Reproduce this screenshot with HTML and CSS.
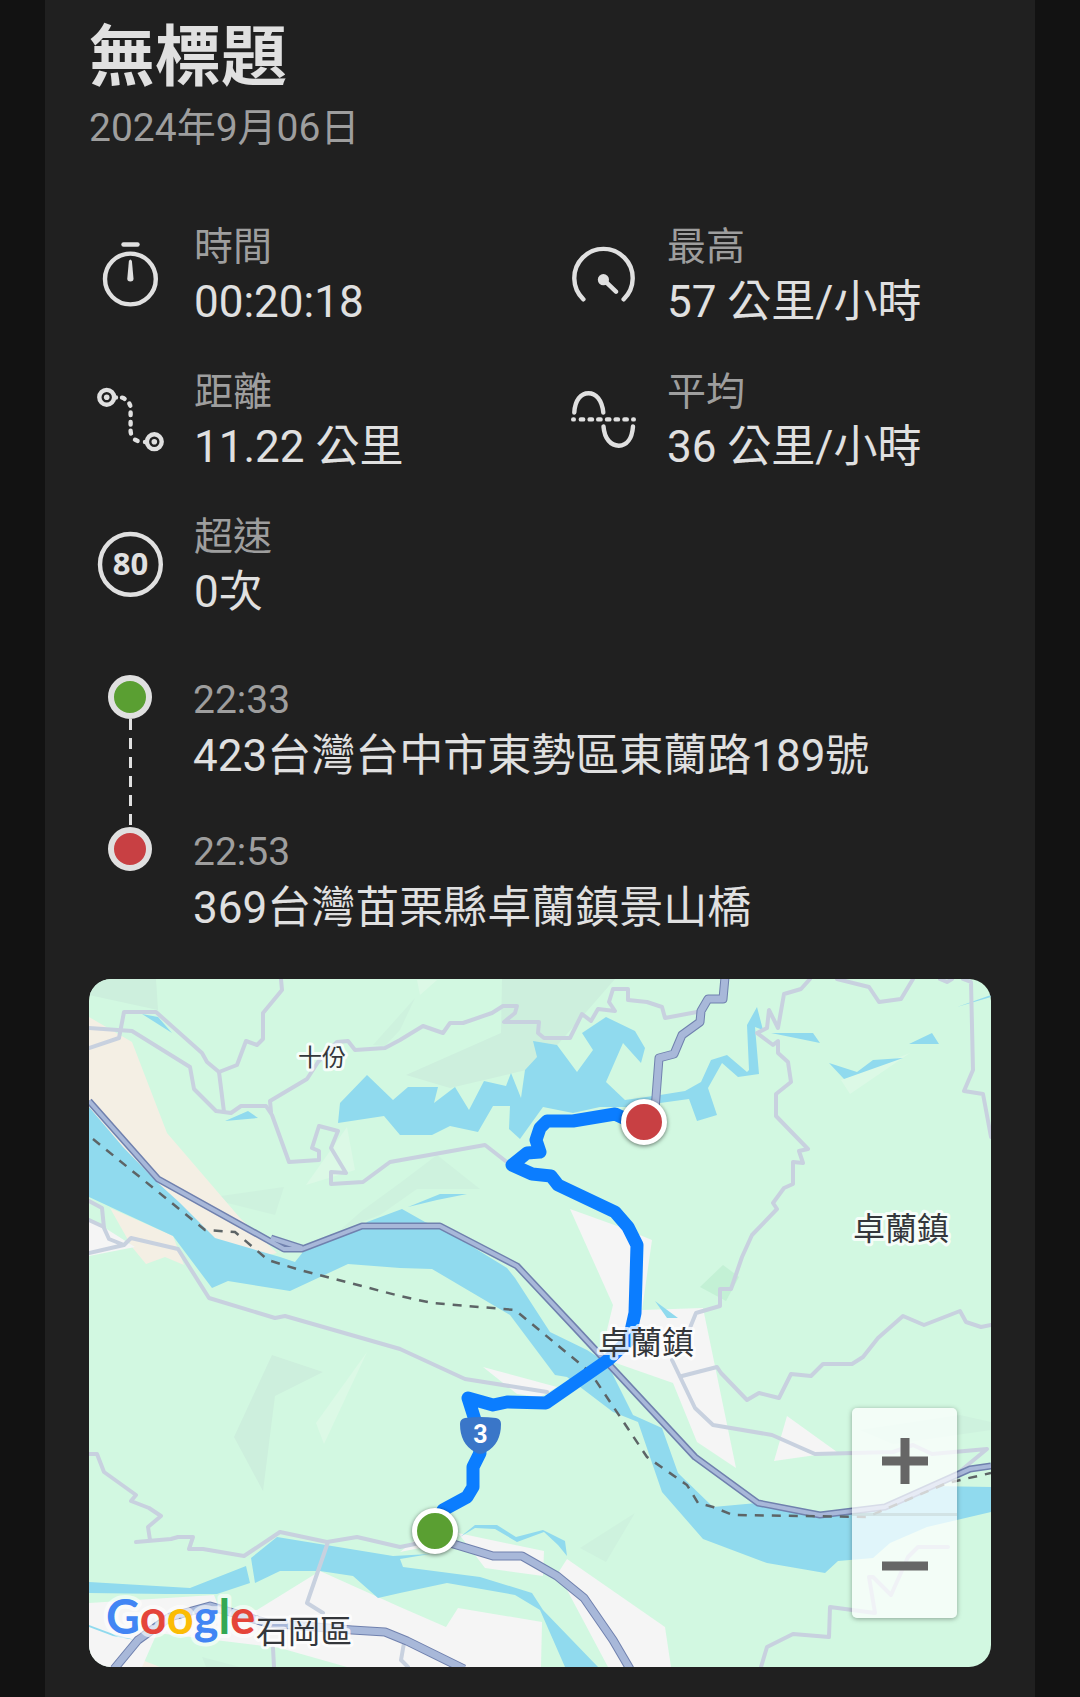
FILE: index.html
```html
<!DOCTYPE html>
<html lang="zh-Hant">
<head>
<meta charset="utf-8">
<meta name="viewport" content="width=device-width, initial-scale=1">
<title>無標題</title>
<link rel="stylesheet" href="styles.css">
</head>
<body>
<main class="trip">
  <header class="trip-header">
    <h1 class="trip-title">無標題</h1>
    <p class="trip-date">2024年9月06日</p>
  </header>

  <dl class="stats">
    <div class="stat">
      <svg class="icon" viewBox="0 0 84 84" aria-hidden="true">
        <circle cx="41.4" cy="44" r="25.4"/>
        <path d="M34.5 9.5h14"/>
        <path class="solid" d="M39.9 26q1.5-3 3 0l1.6 17.500q.2 3-3.100 3t-3.100-3z"/>
      </svg>
      <div class="stat-text"><dt>時間</dt><dd>00:20:18</dd></div>
    </div>
    <div class="stat">
      <svg class="icon" viewBox="0 0 84 84" aria-hidden="true">
        <path d="M21.400 64.300A29.200 29.200 0 1 1 61.600 64.300M41.500 44.700L54 56.700"/>
        <circle class="solid" cx="41.400" cy="44.700" r="5.600"/>
      </svg>
      <div class="stat-text"><dt>最高</dt><dd>57 公里/小時</dd></div>
    </div>
    <div class="stat">
      <svg class="icon" viewBox="0 0 84 84" aria-hidden="true">
        <circle cx="17.700" cy="17.300" r="7.400"/><circle class="solid" cx="17.700" cy="17.300" r="2.800"/>
        <circle cx="65.300" cy="61.700" r="7.400"/><circle class="solid" cx="65.300" cy="61.700" r="2.800"/>
        <path d="M26 17.500h1M33 17.600q1.500.2 2.600 1.200M40.300 23.500l1 2.200M41.600 32.500v2.600M41.600 42v2.600M41.600 50.800q0 1.500.4 2.600M46 59.700q1.200.8 2.600 1.200M56 62h1"/>
      </svg>
      <div class="stat-text"><dt>距離</dt><dd>11.22 公里</dd></div>
    </div>
    <div class="stat">
      <svg class="icon" viewBox="0 0 84 84" aria-hidden="true">
        <path d="M12.300 32.500C13 20 19 13.300 26.500 13.300S40 20 41.300 32.500M41.500 46.500C42.500 59 49 65.700 56.800 65.700S70 59 71 46.500"/>
        <path d="M11.200 39.400h.6M18.800 39.400h2.400M27.600 39.400h2.400M36.200 39.400h2.400M45 39.400h2.400M53.600 39.400h2.400M62.400 39.400h2.400M71.200 39.400h.6"/>
      </svg>
      <div class="stat-text"><dt>平均</dt><dd>36 公里/小時</dd></div>
    </div>
    <div class="stat">
      <svg class="icon" viewBox="0 0 84 84" aria-hidden="true">
        <circle cx="41.400" cy="39.400" r="30.400"/>
        <text class="limit" x="41.400" y="50.400">80</text>
      </svg>
      <div class="stat-text"><dt>超速</dt><dd>0次</dd></div>
    </div>
  </dl>

  <ol class="stops">
    <li class="stop">
      <div class="rail"><span class="dot dot-start"></span><span class="dashes"></span></div>
      <div><time class="stop-time">22:33</time><p class="stop-address">423台灣台中市東勢區東蘭路189號</p></div>
    </li>
    <li class="stop">
      <div class="rail"><span class="dot dot-end"></span></div>
      <div><time class="stop-time">22:53</time><p class="stop-address">369台灣苗栗縣卓蘭鎮景山橋</p></div>
    </li>
  </ol>

  <section class="map" aria-label="地圖">
    <svg class="map-canvas" viewBox="89 979 902 688" preserveAspectRatio="xMidYMid slice">
      <rect class="land" x="89" y="979" width="902" height="688"/>
      <!-- relief -->
      <g class="relief">
        <path d="M89 995L158 1010 156 979H89zM502 979H615L560 1042 535 1068 450 1088 406 1075 501 1033zM272 1355L323 1372 275 1396 263 1491 234 1437z"/>
        <path class="relief-faint" d="M207 1198L284 1187 275 1215zM340 1230L363 1210 400 1183 437 1155 480 1189H417L380 1215zM373 1045L415 998 400 1030 385 1046zM580 1548L635 1513 606 1562zM860 1430L960 1415 991 1422V1430L893 1444zM202 1657L240 1667H206z"/>
        <path class="relief-dark" d="M700 1287L723 1265 739 1277 726 1301z"/>
        <path class="relief-light" d="M367 1352L316 1423 324 1444zM347 1127L355 1170 306 1185zM841 1080L910 1053 850 1094zM417 980H437L420 995z"/>
      </g>
      <path class="sand" d="M89 1017L132 1042 167 1133 240 1218 277 1253 240 1262 89 1120zM110 1208L173 1236 184 1265 165 1257 146 1264 132 1247zM142 1660L160 1667H140z"/>
      <path class="town" d="M89 1220L105 1228 135 1247 89 1256zM570 1209L620 1227 652 1240 642 1310 703 1308 736 1468 697 1442 673 1383 613 1362 607 1330 613 1305zM483 1367L557 1387 540 1397 517 1394zM787 1416L837 1452 774 1461zM458 1533L544 1551 543 1576 485 1568 475 1555zM567 1559L665 1627 671 1667H608L558 1573zM89 1603L214 1595 220 1610H257L320 1571 400 1607 446 1627 458 1608 542 1622 541 1667H347L280 1648 157 1633 142 1667H89zM415 1540L430 1537V1546L400 1552z"/>
      <g class="water">
        <path d="M89 1107L123 1147 158 1183 180 1203 215 1238 280 1257 295 1262 303 1252 362 1228 367 1222 402 1209 425 1222 442 1228 507 1268 515 1278 550 1332 587 1350 607 1363 633 1415 662 1428 678 1473 713 1507 757 1503 820 1515 885 1507 930 1486 991 1487V1512L927 1527 890 1543 873 1558 838 1561 825 1573 767 1563 703 1539 662 1492 638 1422 613 1412 567 1377 555 1375 510 1315 432 1269 400 1268 348 1264 290 1291 228 1281 212 1288 173 1236 89 1197z"/>
        <path d="M338 1123L340 1103 367 1075 393 1100 408 1087H438L434 1103 455 1087 469 1110 484 1081 506 1086 511 1073 521 1098 525 1070 537 1057 533 1041 557 1045 577 1072 593 1050 582 1033 606 1017 635 1031 645 1048 641 1063 623 1043 606 1082 625 1100 660 1095 685 1091 701 1082 711 1060 727 1055 747 1072 749 1070 747 1025 757 1007 763 1030 755 1027 759 1074 738 1077 722 1063 708 1088 717 1115 697 1121 689 1099 660 1103 627 1107 600 1107 573 1113 543 1107 520 1139 509 1129 510 1106H493L478 1132 450 1126 432 1135H400L384 1116z"/>
        <path d="M142 1014L158 1017 172 1033zM225 1121L248 1111 258 1118zM408 1207L440 1194H467L437 1200zM771 1033H813L820 1043zM829 1063L857 1072 873 1060 903 1058 844 1079zM909 1044L932 1033 939 1044zM957 1007L991 995V997zM655 1301L678 1318H667z"/>
        <path d="M89 1582L190 1588 246 1566 250 1583 217 1594H166L89 1593zM251 1558L277 1537 393 1556 430 1554 400 1559 403 1567 480 1577 532 1593 543 1610 598 1667H565L540 1610 515 1595 447 1583 400 1593 378 1598 353 1576 320 1571H280L255 1583zM460 1537L475 1525H497L516 1537 543 1530 565 1541 567 1556 558 1545 544 1532 517 1542 495 1529 475 1528zM89 1625L113 1634 135 1640 113 1636 89 1627z"/>
      </g>
      <g class="road">
        <path d="M89 1048L119 1038 124 1012H156L202 1053 207 1062 219 1072 224 1112"/>
        <path d="M89 1028L132 1031 190 1067 194 1089 216 1111 231 1113 241 1106H266L272 1115 289 1162 319 1160V1151L312 1148 319 1126 338 1131 331 1148 346 1173 331 1172V1184L363 1182 390 1162 485 1145 512 1166"/>
        <path d="M281 979L282 990 263 1013V1039L257 1045 246 1041 237 1065 219 1072"/>
        <path d="M271 1112L270 1101 307 1079 318 1062 337 1042 348 1041 355 1050 385 1048 400 1040 423 1026 443 1033 450 1023H463L492 1013 503 1006H517L515 1013 504 1022H539L538 1033 544 1038H570L582 1014 591 1021 598 1009 615 1011 609 1002 613 989H628V1000L647 1002 662 1007 665 1018 697 1012"/>
        <path d="M89 1201L102 1208 104 1228 109 1239 124 1245 131 1238 178 1249 209 1298 275 1318 285 1316 400 1349 465 1379 547 1392M89 1220L104 1227M89 1253L124 1245"/>
        <path d="M810 979L801 989 784 994 778 1028 769 1010 767 1028 757 1033 773 1045 778 1041V1053L788 1062 791 1082 776 1094V1116L808 1149 799 1151 803 1163 793 1162V1184L784 1188 773 1203 777 1209 752 1235 742 1257 731 1289H720V1306L696 1313 685 1340"/>
        <path d="M837 979L869 987 879 1002 901 999 913 979M940 979L947 982 952 979M963 979L971 982 973 1070 964 1091 983 1094 991 1137"/>
        <path d="M682 1376L717 1367 721 1373 747 1400 759 1393 779 1398 791 1374 811 1376 823 1364H852L863 1357 878 1338 903 1316 924 1325 960 1311 966 1322 981 1327 991 1325"/>
        <path d="M672 1360L695 1408 713 1425 772 1435 815 1454 893 1452 913 1445 932 1454 987 1449 970 1463 957 1474"/>
        <path d="M761 1667L767 1647 793 1634 829 1637 830 1607 875 1613 869 1577H873L891 1595 908 1557 918 1547H948"/>
        <path d="M89 1454H97L104 1472 136 1495 131 1501 149 1508 161 1516 148 1527 150 1540M136 1542L171 1539 178 1537H193L189 1549H203L244 1556 280 1532 327 1542 357 1537 400 1547 415 1544M328 1542L307 1603 323 1613M273 1648L274 1667M404 1643L401 1660 408 1667"/>
      </g>
      <g class="highway-edge">
        <path d="M271 1238L302 1248M89 1101L158 1179 284 1249H302L362 1226H440L517 1266 577 1330 695 1457 758 1503 820 1515 885 1507 970 1469 991 1466"/>
        <path class="wide" d="M725 977L723 999H708L701 1011 700 1022 682 1035 674 1054 659 1058 655 1110M450 1543L493 1556H522L557 1576 584 1598 613 1640 630 1669M114 1669L138 1640 170 1617 210 1606 267 1623 352 1630 385 1632 407 1641 464 1669"/>
      </g>
      <g class="highway">
        <path d="M271 1238L302 1248M89 1101L158 1179 284 1249H302L362 1226H440L517 1266 577 1330 695 1457 758 1503 820 1515 885 1507 970 1469 991 1466"/>
        <path class="wide" d="M725 977L723 999H708L701 1011 700 1022 682 1035 674 1054 659 1058 655 1110M450 1543L493 1556H522L557 1576 584 1598 613 1640 630 1669M114 1669L138 1640 170 1617 210 1606 267 1623 352 1630 385 1632 407 1641 464 1669"/>
      </g>
      <path class="railway" d="M93 1139L205 1230 235 1232 268 1260 300 1270 400 1296 432 1303 515 1310 590 1372 647 1457 687 1485 698 1503 713 1507 733 1515 867 1517 947 1483 991 1473"/>
      <path class="route" d="M644 1122L628 1120 615 1114 573 1121 547 1121 540 1128 536 1140 540 1152 527 1153 512 1165 532 1174 551 1176 558 1185 615 1212 628 1227 637 1245 635 1313 629 1340 608 1360 546 1403 507 1402 493 1405 468 1398 475 1420 480 1453 473 1467V1487L467 1497 443 1510 435 1531"/>
      <path class="shield" d="M465 1418Q480 1416 496 1418Q501 1419 501 1424Q501 1444 486 1452Q480 1456 475 1452Q460 1444 460 1424Q460 1419 465 1418z"/>
      <text class="shield-number" x="480.500" y="1443">3</text>
      <g class="pin">
        <circle class="pin-start" cx="435" cy="1531" r="20.500"/>
        <circle class="pin-end" cx="644" cy="1122" r="20.500"/>
      </g>
      <g class="place">
        <text class="place-small" x="298" y="1066">十份</text>
        <text x="853" y="1240">卓蘭鎮</text>
        <text x="598" y="1354">卓蘭鎮</text>
        <text x="256" y="1643">石岡區</text>
      </g>
      <text class="logo" x="106" y="1634"><tspan class="blue">G</tspan><tspan class="red">o</tspan><tspan class="yellow">o</tspan><tspan class="blue">g</tspan><tspan class="green">l</tspan><tspan class="red">e</tspan></text>
    </svg>
    <div class="zoom">
      <button class="zoom-button" type="button" aria-label="放大"><svg viewBox="0 0 46 46"><path d="M23 0v46M0 23h46"/></svg></button>
      <button class="zoom-button" type="button" aria-label="縮小"><svg viewBox="0 0 46 46"><path d="M0 23h46"/></svg></button>
    </div>
  </section>
</main>
</body>
</html>
```
FILE: styles.css
```css
* { box-sizing: border-box; }

body {
  margin: 0;
  padding: 0 45px;
  background: #121212;
  color: #e0e0e0;
  font-family: Roboto, "Noto Sans CJK TC", sans-serif;
}

h1, p, dl, dd, ol { margin: 0; padding: 0; }

.trip {
  min-height: 100vh;
  padding: 18px 44px 30px;
  background: #202020;
}

.trip-title { font-size: 66px; line-height: 80px; font-weight: 700; }
.trip-date { font-size: 39px; line-height: 60px; color: #9e9e9e; }

.stats {
  display: grid;
  grid-template-columns: 473fr 429fr;
  row-gap: 35px;
  margin-top: 63px;
}
.stat { display: flex; align-items: center; gap: 21px; }
.stat dt { font-size: 39px; line-height: 52px; color: #9e9e9e; }
.stat dd { font-size: 44px; line-height: 59px; white-space: nowrap; }
.stat + .stat { margin-top: 0; }

.icon {
  flex: none;
  width: 84px;
  height: 84px;
  fill: none;
  stroke: #e0e0e0;
  stroke-width: 4.4;
  stroke-linecap: round;
}
.icon .solid { fill: #e0e0e0; stroke: none; }
.icon .limit {
  fill: #e0e0e0;
  stroke: none;
  font: 700 31px "Open Sans", sans-serif;
  text-anchor: middle;
}
.stats { row-gap: 34px; }

.stops { margin-top: 52px; list-style: none; }
.stop { display: grid; grid-template-columns: 82px 1fr; column-gap: 22px; }
.stop + .stop { padding-top: 40px; }
.stop-time { display: block; font-size: 39px; line-height: 52px; color: #9e9e9e; }
.stop-address { font-size: 44px; line-height: 60px; }
.rail { display: flex; flex-direction: column; align-items: center; }
.dot {
  flex: none;
  width: 44px;
  height: 44px;
  margin-top: 1px;
  border: 6px solid #e0e0e0;
  border-radius: 50%;
}
.dot-start { background: #5a9f32; }
.dot-end { background: #c84043; }
.dashes {
  flex: 1;
  width: 3px;
  margin-bottom: -40px;
  background: repeating-linear-gradient(#e0e0e0 0 11px, transparent 11px 19px);
}

.map {
  position: relative;
  margin-top: 41px;
  aspect-ratio: 902 / 688;
  overflow: hidden;
  border-radius: 22px;
}
.map-canvas { display: block; width: 100%; height: 100%; }

.land { fill: #d2f8e1; }
.relief { fill: #cdefdd; }
.relief-faint { fill: #cef2de; }
.relief-dark { fill: #c3f1d5; }
.relief-light { fill: #dcf9e6; }
.sand { fill: #f4efe4; }
.town { fill: #f5f5f5; }
.water { fill: #90daee; }
.road { fill: none; stroke: #c8d1df; stroke-width: 4; stroke-linejoin: round; stroke-linecap: round; }
.highway-edge { fill: none; stroke: #7081ae; stroke-width: 7; stroke-linejoin: round; }
.highway { fill: none; stroke: #a8b8d9; stroke-width: 4; stroke-linejoin: round; }
.highway-edge .wide { stroke-width: 9; }
.highway .wide { stroke-width: 7; }
.railway { fill: none; stroke: #5d6466; stroke-width: 2.5; stroke-dasharray: 9 8; }
.route { fill: none; stroke: #0b7dff; stroke-width: 13; stroke-linejoin: round; stroke-linecap: round; }
.shield { fill: #3a76c8; }
.shield-number { fill: #fff; font-size: 25px; font-weight: 700; text-anchor: middle; }
.pin { stroke: #fff; stroke-width: 5; filter: drop-shadow(0 1px 2px rgba(0, 0, 0, .55)); }
.pin-start { fill: #5a9f32; }
.pin-end { fill: #c84043; }
.place {
  fill: #34373b;
  stroke: rgba(255, 255, 255, .8);
  stroke-width: 6;
  stroke-linejoin: round;
  paint-order: stroke;
  font-family: "Noto Sans CJK TC", sans-serif;
  font-size: 32px;
}
.place-small { font-size: 24px; }
.logo {
  font: 700 47px Lato, sans-serif;
  stroke: rgba(255, 255, 255, .6);
  stroke-width: 8;
  stroke-linejoin: round;
  paint-order: stroke;
}
.blue { fill: #4285f4; }
.red { fill: #e5453a; }
.yellow { fill: #fbbc05; }
.green { fill: #34a853; }

.zoom {
  position: absolute;
  right: 34px;
  bottom: 49px;
  width: 105px;
  border-radius: 5px;
  background: rgba(255, 255, 255, .72);
  box-shadow: 0 1px 5px rgba(0, 0, 0, .35);
}
.zoom-button {
  display: flex;
  align-items: center;
  justify-content: center;
  width: 100%;
  height: 105px;
  padding: 0;
  border: 0;
  background: none;
}
.zoom-button + .zoom-button { box-shadow: inset 0 3px rgba(200, 215, 215, .6); }
.zoom-button svg { width: 46px; height: 46px; stroke: #666; stroke-width: 9; }
```
